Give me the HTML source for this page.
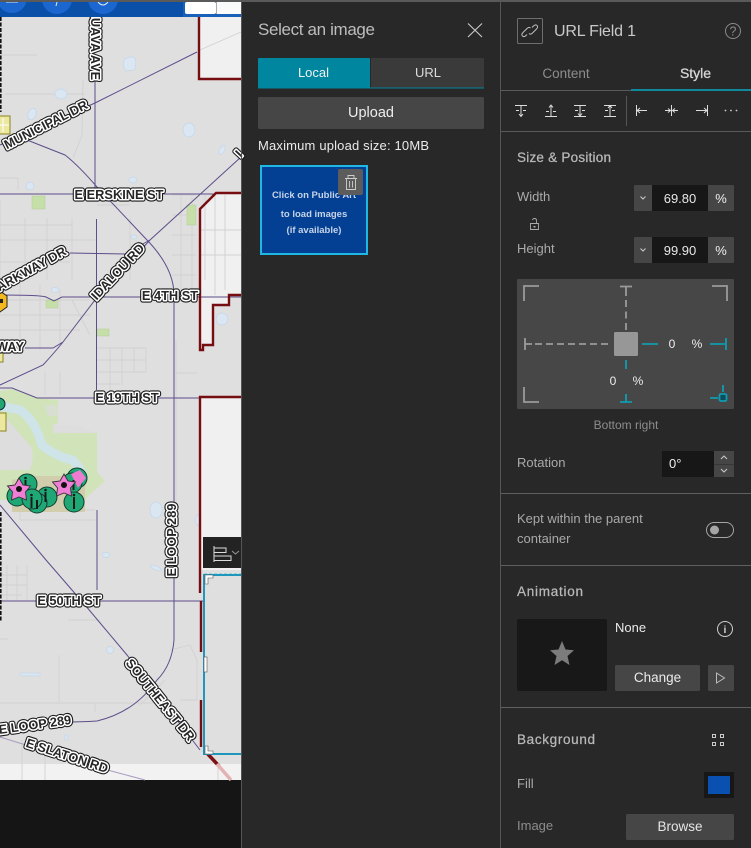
<!DOCTYPE html>
<html><head><meta charset="utf-8"><style>
html,body{margin:0;padding:0;width:751px;height:848px;overflow:hidden;background:#282828}
svg{display:block}
text{font-family:"Liberation Sans",sans-serif}
.l{font-weight:bold;font-size:12.8px;fill:#262626;stroke:#fff;stroke-width:3px;stroke-linejoin:round;paint-order:stroke;text-anchor:middle}
.o{font-weight:bold;font-size:12.8px;fill:#111;stroke:#1a1a1a;stroke-width:5.2px;stroke-linejoin:round;text-anchor:middle}
.r{fill:none;stroke:#5d4d8a;stroke-width:1}
.g{fill:none;stroke:#d2d1d2;stroke-width:.9}
.b{fill:none;stroke:#760d10;stroke-width:2.4}
.lab{fill:#aaa;font-size:13px}
.ic{fill:none;stroke:#ddd;stroke-width:1}
.h{font-size:13.5px;fill:#b8b8b8;stroke:#b8b8b8;stroke-width:.25px}
.map{filter:blur(.35px)}
</style></head><body>
<svg width="751" height="848" viewBox="0 0 751 848" xmlns="http://www.w3.org/2000/svg">
<rect width="751" height="848" fill="#282828"/>
<!-- map -->
<rect x="0" y="0" width="241" height="780" fill="#e0dfdf"/>
<rect x="0" y="764" width="241" height="16" fill="#f2f2f2"/>
<rect x="0" y="780" width="241" height="68" fill="#151515"/>
<g class="map">
<!-- minor streets -->
<g class="g">
<path d="M0 55H37M5 94H85M83 80L82 135L73 158M0 178H18V190M0 225H72M0 240H95M0 262H70M25 218V280M47 218V280M72 218V280M130 218V280M0 200V280M97 205H130M172 195H196M172 215H196M172 235H196M172 255H196M172 275H196M181 195V290M192 195V290"/>
<path d="M0 300H90M0 315H90M0 330H80M20 280V350M40 285V350M60 290V345M72 300L90 335M97 348H146M97 360H146M97 372H146M97 384H120M110 348V390M122 348V385M134 348V372M146 348V372M45 372V395M60 372V395M0 440H30M0 455H30M0 470H30M0 485H20M20 510H95M20 520H95M20 520V500M176 373H197M176 340V510"/>
<path d="M0 575H27M0 585H27M0 595H22M7 565V600M17 565V600M27 565V600M68 620H100M0 639H8M59 655V702M0 703H172M95 703V712M170 650L190 645L197 660V700M180 700H197M22 740V780M45 740V780M140 705L155 690L165 680M218 780V764"/>
</g>
<!-- water -->
<g fill="#dae6f1" stroke="#c3d6e8" stroke-width=".7">
<path d="M124 60Q130 55 135 58Q137 65 134 70L126 71Q122 66 124 60Z"/>
<ellipse cx="61" cy="94" rx="6" ry="5"/><ellipse cx="32" cy="114" rx="4" ry="6" transform="rotate(20 32 114)"/>
<ellipse cx="189" cy="130" rx="6" ry="7"/><ellipse cx="222" cy="150" rx="2.500" ry="5" transform="rotate(30 222 150)"/>
<ellipse cx="133" cy="180" rx="4" ry="3"/><ellipse cx="30" cy="186" rx="4" ry="4"/><ellipse cx="134" cy="237" rx="3" ry="2"/>
<ellipse cx="55" cy="290" rx="4" ry="2.500"/><ellipse cx="222" cy="319" rx="6" ry="6"/>
<ellipse cx="156" cy="510" rx="6" ry="8"/><ellipse cx="201" cy="520" rx="6" ry="6"/><ellipse cx="106" cy="555" rx="4" ry="2.500"/><ellipse cx="156" cy="568" rx="6" ry="2" transform="rotate(25 156 568)"/>
<circle cx="110" cy="650" r="3.500"/><rect x="20" y="673" width="20" height="3"/><rect x="65" y="735" width="3" height="5"/>
</g>
<!-- parks -->
<g fill="#c6dfa9" stroke="#b3cd98" stroke-width=".5">
<rect x="32" y="196" width="13" height="13"/><rect x="187" y="205" width="9" height="20"/>
<rect x="46" y="300" width="12" height="8"/><rect x="97" y="329" width="12" height="7"/>
</g>
<path d="M0 391L12 389L37 398L58 400V423L53 425V433H97V472L105 481L84 500H0Z" fill="#d0e3b9"/>
<path d="M45 405H57V416H48ZM53 425H75L97 433H53Z" fill="#dcdcdc" opacity=".7"/>
<path d="M0 411L32 448Q34 460 30 470H0Z" fill="#dedddd"/>
<path d="M0 406L20 410Q35 420 42 445Q55 456 72 460Q82 468 84 480" fill="none" stroke="#cfe4e8" stroke-width="9"/>
<path d="M36 476H85V512H12V480Z" fill="#d2cdad"/>
<!-- regions -->
<path d="M199 17V79H241V17Z" fill="#f1f0f0"/>
<path d="M241 193H216L200 209V350H203V345H213V305H229V295H241Z" fill="#f1f0f0"/>
<path d="M241 397H200V570H241Z" fill="#f1f0f0"/>
<path class="g" d="M200 50L241 32M200 230H241M200 255H241M205 195V280M215 195V295M225 195V290"/>
<!-- roads -->
<g class="r">
<path d="M95 80V190M197 52L95 103L0 145"/>
<path d="M0 194H215M96.500 219V390M97 510V590"/>
<path d="M27 140L65 155Q78 165 97 187L147 240Q174 268 174 295V640Q172 665 157 680Q135 712 97 721Q80 722 65 722"/>
<path d="M241 157L150 240L95 300L63 342Q55 352 43 365L0 385"/>
<path d="M70 253L125 254L150 240"/>
<path d="M0 295Q40 295 46 297L54 301L62 297H241"/>
<path d="M25 348H53L63 342"/>
<path d="M0 388H12L37 398H200"/>
<path d="M0 505L46 560L85 605L127 655L200 750"/>
<path d="M0 601H205"/>
<path d="M0 737L100 768L145 780" stroke="#a79cc0"/>
</g>
<path class="b" d="M199 17V79H241"/>
<path class="b" d="M241 193H216L200 209V350H203V345H213V305H229V295H241"/>
<path class="b" d="M241 397H200V593M201 601V652M201 700V747"/>
<path d="M204 750L219 766" fill="none" stroke="#7a1015" stroke-width="3.500"/>
<path d="M217 764L231 780" fill="none" stroke="#e3b3b3" stroke-width="3.500"/>
<!-- small yellow icons -->
<g fill="#ece8a0" stroke="#8a8420" stroke-width="1"><rect x="-4" y="116" width="14" height="18"/><rect x="-6" y="344" width="9" height="18"/><rect x="-5" y="413" width="11" height="18"/></g>
<path d="M-3 125H9M3 118V132" stroke="#fff" stroke-width="1"/>
<path d="M-6 294L0 291L7 296V307L0 312L-6 310Z" fill="#f3b81f" stroke="#222"/><rect x="-2" y="299" width="5" height="4" fill="#222"/>
<circle cx="-1" cy="404" r="6" fill="#22a56e" stroke="#124"/>
<!-- map labels -->
<g>
<g transform="translate(95,44) rotate(90)"><text class="o" y="4">GUAVA AVE</text><text class="l" y="4">GUAVA AVE</text></g>
<g transform="translate(46,125) rotate(-27)"><text class="o" y="4">MUNICIPAL DR</text><text class="l" y="4">MUNICIPAL DR</text></g>
<text class="o" x="119" y="199">E ERSKINE ST</text><text class="l" x="119" y="199">E ERSKINE ST</text>
<g transform="translate(118,272) rotate(-47)"><text class="o" y="4">IDALOU RD</text><text class="l" y="4">IDALOU RD</text></g>
<g transform="translate(28,271) rotate(-29)"><text class="o" y="4">PARKWAY DR</text><text class="l" y="4">PARKWAY DR</text></g>
<g transform="translate(239,154) rotate(-47)"><text class="o" y="4">I</text><text class="l" y="4">I</text></g>
<text class="o" x="170" y="300">E 4TH ST</text><text class="l" x="170" y="300">E 4TH ST</text>
<text class="o" x="10" y="351">WAY</text><text class="l" x="10" y="351">WAY</text>
<text class="o" x="127" y="402">E 19TH ST</text><text class="l" x="127" y="402">E 19TH ST</text>
<g transform="translate(172,540) rotate(-90)"><text class="o" y="4">E LOOP 289</text><text class="l" y="4">E LOOP 289</text></g>
<text class="o" x="69" y="605">E 50TH ST</text><text class="l" x="69" y="605">E 50TH ST</text>
<g transform="translate(160,700) rotate(51)"><text class="o" y="4">SOUTHEAST DR</text><text class="l" y="4">SOUTHEAST DR</text></g>
<g transform="translate(35,725) rotate(-8)"><text class="o" y="4">E LOOP 289</text><text class="l" y="4">E LOOP 289</text></g>
<g transform="translate(67,756) rotate(18)"><text class="o" y="4">E SLATON RD</text><text class="l" y="4">E SLATON RD</text></g>
</g>
<!-- markers -->
<g fill="#1fa876" stroke="#123d30" stroke-width="1">
<circle cx="27" cy="484" r="10"/><circle cx="17" cy="496" r="10"/><circle cx="47" cy="497" r="10"/><circle cx="37" cy="503" r="10"/><circle cx="32" cy="499" r="10"/>
<circle cx="77" cy="478" r="10"/><circle cx="72" cy="483" r="10"/><circle cx="74" cy="502" r="10"/>
</g>
<path d="M71 474L80 470L86 478L78 488Z" fill="#ee7bd0"/>
<g fill="#1a1a1a"><path d="M24.500 480h2v12h-2zM30.500 497h2v11h-2zM36 500h2v9h-2zM44.500 492h2v10h-2zM73 497h2v12h-2zM72.500 480h2v10h-2z"/><circle cx="25.500" cy="478" r="1.300"/><circle cx="31.500" cy="495" r="1.300"/><circle cx="45.500" cy="490" r="1.300"/><circle cx="74" cy="495" r="1.300"/></g>
<path d="M19 478L23 485L30.500 486L25.500 492L26.500 500L19 497L11.500 500L12.500 492L7.500 486L15 485Z" fill="#f07ed6" stroke="#333" stroke-width=".9"/>
<circle cx="19" cy="489" r="3" fill="#111"/>
<path d="M64 474L68 481L75.500 482L70.500 488L71.500 496L64 493L56.500 496L57.500 488L52.500 482L60 481Z" fill="#f07ed6" stroke="#333" stroke-width=".9"/>
<circle cx="64" cy="485" r="3" fill="#111"/>
</g>
<!-- dashed left edge -->
<path d="M.8 17V112M.8 512V622" fill="none" stroke="#111" stroke-width="1.600" stroke-dasharray="4 1.500"/>
<!-- selection box -->
<rect x="204" y="575" width="37" height="179" fill="#e0dfdf"/>
<path d="M241 575H204V754H241" fill="none" stroke="#1f97bd" stroke-width="2"/>
<path d="M204 573.500H241" stroke="#9fd0d8" stroke-dasharray="3 2"/>
<path d="M205 575H213V578H208V584H205Z" fill="#fff" stroke="#555" stroke-width=".6"/>
<path d="M205 746H208V751H213V754H205Z" fill="#fff" stroke="#555" stroke-width=".6"/>
<rect x="204" y="657" width="3" height="15" fill="#fff" stroke="#555" stroke-width=".6"/>
<!-- floating toolbar -->
<rect x="203" y="537" width="38" height="31" fill="#232323"/>
<path d="M214 546V562M214.500 548H226V552.500H214.500M214.500 556H231V560.500H214.500" fill="none" stroke="#ddd" stroke-width="1"/>
<path d="M232 551L235.500 554L239 551" fill="none" stroke="#999"/>
<!-- top bar -->
<rect x="0" y="2" width="241" height="15" fill="#0a4fa8"/>
<rect x="183" y="2" width="58" height="15" fill="#1a60b8"/>
<rect x="185" y="2" width="31" height="12" rx="2" fill="#fff"/><rect x="216.500" y="2" width="24.500" height="12" fill="#fafafa"/><path d="M216.500 2V14" stroke="#aaa"/>
<g fill="#1c66d0"><circle cx="12" cy="-2" r="15"/><circle cx="57" cy="-1" r="15"/><circle cx="103" cy="-1" r="15"/></g>
<path d="M6 2H18M57 2L56 6M98 2Q103 8 108 2" stroke="#dfe8f5" fill="none"/>
<rect x="0" y="0" width="751" height="2" fill="#5a5a5a"/>
<!-- dividers -->
<rect x="241" y="0" width="1" height="848" fill="#565656"/>
<rect x="500" y="0" width="1" height="848" fill="#565656"/>
<!-- select image panel -->
<text x="258" y="35" font-size="17" fill="#bdbdbd" textLength="117">Select an image</text>
<path d="M468 23.500L482 37M482 23.500L468 37" stroke="#ccc" stroke-width="1.100"/>
<rect x="258" y="58" width="112" height="30" rx="1" fill="#00869e"/>
<rect x="371" y="58" width="113" height="30" rx="1" fill="#3a3a3a"/>
<rect x="258" y="87.500" width="226" height="1" fill="#00869e"/>
<text x="313.500" y="77" font-size="13" fill="#f2f2f2" text-anchor="middle">Local</text>
<text x="428" y="77" font-size="13" fill="#ddd" text-anchor="middle">URL</text>
<rect x="258" y="97" width="226" height="32" rx="1.500" fill="#464646"/>
<text x="371" y="117" font-size="14.500" fill="#eee" text-anchor="middle">Upload</text>
<text x="258" y="150" font-size="13" fill="#eaeaea" textLength="171">Maximum upload size: 10MB</text>
<rect x="261" y="166" width="106" height="88" fill="#034094" stroke="#1fb8e4" stroke-width="2"/>
<g font-weight="bold" font-size="9.500" fill="#c6d3e8" text-anchor="middle">
<text x="314" y="198">Click on Public Art</text>
<text x="314" y="217">to load images</text>
<text x="314" y="233">(if available)</text></g>
<rect x="338" y="169" width="25" height="26" rx="2" fill="#5c5c5c"/>
<path d="M345 178.500H357M348 178V175.500H354V178M346.500 179V189.500H355.500V179M349.500 181V187.500M352.500 181V187.500" fill="none" stroke="#cfcfcf" stroke-width=".9"/>
<!-- right panel header -->
<rect x="517.500" y="18.500" width="25" height="25" rx="1" fill="none" stroke="#6e6e6e"/>
<path d="M527 34.500L526 35.500Q524 37.500 522.500 36Q521 34.500 523 32.500L527 28.500Q529 26.500 530.500 28M532 27.500L533.500 26Q535.500 24 537 25.500Q538.500 27 536.500 29L532.500 33Q530.500 35 529 33.500" fill="none" stroke="#c4c4c4" stroke-width=".9"/>
<text x="554" y="36" font-size="16" fill="#c9c9c9" textLength="82">URL Field 1</text>
<circle cx="733" cy="31" r="7.500" fill="none" stroke="#8a8a8a"/>
<text x="733" y="35.500" font-size="12.500" fill="#8a8a8a" text-anchor="middle">?</text>
<text x="566" y="78" font-size="13.500" fill="#8d8d8d" text-anchor="middle">Content</text>
<text x="695.500" y="78" font-size="14" fill="#d5d5d5" stroke="#d5d5d5" stroke-width=".3" text-anchor="middle">Style</text>
<rect x="501" y="90" width="250" height="1" fill="#5a5a5a"/>
<rect x="631" y="89" width="120" height="2" fill="#0f8a9c"/>
<!-- toolbar -->
<g class="ic">
<path d="M515 105.500H527M516 110.500H519M523 110.500H526M521 105.500V116M519 114L521 116.500L523 114"/>
<path d="M545 116.500H557M546 111.500H549M553 111.500H556M551 116V105.500M549 107.500L551 105L553 107.500"/>
<path d="M574 105.500H586M574 116.500H586M575 110.500H578M582 110.500H585M580 105.500V116M578 113.500L580 116L582 113.500"/>
<path d="M604 105.500H616M604 116.500H616M605 110.500H608M612 110.500H615M610 116V105.500M608 108L610 105.500L612 108"/>
<path d="M636.500 105V116M637 110.500H647M640 108L637 110.500L640 113"/>
<path d="M671.500 105V116M665 110.500H670M678 110.500H673M668 108.500L670.500 110.500L668 112.500M675 108.500L672.500 110.500L675 112.500"/>
<path d="M707.500 105V116M696 110.500H707M704 108L707 110.500L704 113"/>
</g>
<g fill="#ccc"><circle cx="725.500" cy="110.500" r=".9"/><circle cx="731" cy="110.500" r=".9"/><circle cx="736.500" cy="110.500" r=".9"/></g>
<rect x="626" y="96" width="1" height="30" fill="#555"/>
<rect x="501" y="131" width="250" height="1" fill="#5a5a5a"/>
<!-- size & position -->
<text class="h" x="517" y="162" textLength="94">Size &amp; Position</text>
<text class="lab" x="517" y="201">Width</text>
<rect x="634" y="185" width="18" height="26" rx="1" fill="#464646"/>
<path d="M640.500 196.500L643 199L645.500 196.500" fill="none" stroke="#ccc"/>
<rect x="652" y="185" width="56" height="26" fill="#171717"/>
<text x="680" y="203" font-size="13" fill="#e8e8e8" text-anchor="middle">69.80</text>
<rect x="708" y="185" width="26" height="26" rx="1" fill="#464646"/>
<text x="721" y="203" font-size="13" fill="#eee" text-anchor="middle">%</text>
<path d="M530.500 223.500H538.500V229.500H530.500ZM536.500 223.500V220.500Q536.500 218.500 534.500 218.500Q533 218.500 532.500 220" fill="none" stroke="#aaa" stroke-width=".9"/>
<rect x="533.500" y="226" width="2" height="1.500" fill="#aaa"/>
<text class="lab" x="517" y="253">Height</text>
<rect x="634" y="237" width="18" height="26" rx="1" fill="#464646"/>
<path d="M640.500 248.500L643 251L645.500 248.500" fill="none" stroke="#ccc"/>
<rect x="652" y="237" width="56" height="26" fill="#171717"/>
<text x="680" y="255" font-size="13" fill="#e8e8e8" text-anchor="middle">99.90</text>
<rect x="708" y="237" width="26" height="26" rx="1" fill="#464646"/>
<text x="721" y="255" font-size="13" fill="#eee" text-anchor="middle">%</text>
<!-- anchor widget -->
<rect x="517" y="279" width="217" height="130" rx="1" fill="#474747"/>
<g fill="none" stroke="#9a9a9a" stroke-width="1.800">
<path d="M524 301V286H539M712 286H727V301M524 387V402H539"/>
<path d="M620 286.500H632M626 287V296"/>
<path d="M525 338V350M525.500 344H532"/>
<path d="M626 300V330" stroke-dasharray="7 4.500"/>
<path d="M535 344H610" stroke-dasharray="7 4"/>
</g>
<rect x="614" y="332" width="24" height="24" rx="1.500" fill="#979797"/>
<g fill="none" stroke="#0f9cb0" stroke-width="1.800">
<path d="M642 344H658M710 344H725M726 338V350M626 360V369M620 402H632M626 394V402"/>
<path d="M710 398H718M723 385V392"/>
<rect x="719.500" y="394" width="7" height="7" rx="1.500" fill="#0d4d5c"/>
</g>
<text x="672" y="348" font-size="12" fill="#eee" text-anchor="middle">0</text>
<text x="697" y="348" font-size="12" fill="#eee" text-anchor="middle">%</text>
<text x="613" y="385" font-size="12" fill="#eee" text-anchor="middle">0</text>
<text x="638" y="385" font-size="12" fill="#eee" text-anchor="middle">%</text>
<text x="626" y="429" font-size="12" fill="#8d8d8d" text-anchor="middle">Bottom right</text>
<text class="lab" x="517" y="467">Rotation</text>
<rect x="662" y="451" width="52" height="26" rx="1" fill="#171717"/>
<text x="669" y="468" font-size="13" fill="#eee">0°</text>
<rect x="714" y="451" width="20" height="13" fill="#464646"/><rect x="714" y="464.500" width="20" height="12.500" fill="#464646"/>
<path d="M721 459L724 456L727 459M721 469L724 472L727 469" fill="none" stroke="#ccc"/>
<rect x="501" y="493" width="250" height="1" fill="#5f5f5f"/>
<text class="lab" x="517" y="523">Kept within the parent</text>
<text class="lab" x="517" y="543">container</text>
<rect x="706.500" y="522.500" width="27" height="15" rx="7.500" fill="none" stroke="#a5a5a5"/>
<circle cx="714.500" cy="530" r="4.500" fill="#a5a5a5"/>
<rect x="501" y="565" width="250" height="1" fill="#5f5f5f"/>
<!-- animation -->
<text class="h" x="517" y="596" textLength="66">Animation</text>
<rect x="517" y="619" width="90" height="72" rx="2" fill="#181818"/>
<path d="M562 641L565.500 649.500L574 650.300L567.500 656L569.500 665L562 660.300L554.500 665L556.500 656L550 650.300L558.500 649.500Z" fill="#7c7c7c"/>
<text x="615" y="632" font-size="13" fill="#eaeaea">None</text>
<circle cx="725" cy="629" r="7.500" fill="none" stroke="#cfcfcf"/>
<text x="725" y="633" font-size="10.500" font-weight="bold" fill="#cfcfcf" text-anchor="middle">i</text>
<rect x="615" y="665" width="85" height="26" rx="1.500" fill="#464646"/>
<text x="657.500" y="682" font-size="13.500" fill="#eaeaea" text-anchor="middle">Change</text>
<rect x="708" y="665" width="26" height="26" rx="1.500" fill="#464646"/>
<path d="M716.500 673V683L724.500 678Z" fill="none" stroke="#bbb"/>
<rect x="501" y="707" width="250" height="1" fill="#5f5f5f"/>
<!-- background -->
<text class="h" x="517" y="744" textLength="78">Background</text>
<g fill="none" stroke="#ccc"><rect x="712.500" y="734.500" width="3" height="3"/><rect x="720.500" y="734.500" width="3" height="3"/><rect x="712.500" y="742.500" width="3" height="3"/><rect x="720.500" y="742.500" width="3" height="3"/></g>
<text class="lab" x="517" y="788">Fill</text>
<rect x="704" y="772" width="30" height="26" fill="#171717"/>
<rect x="708" y="776" width="22" height="18" fill="#0a50b0"/>
<text class="lab" x="517" y="830" style="fill:#8d8d8d">Image</text>
<rect x="626" y="814" width="108" height="26" rx="1.500" fill="#464646"/>
<text x="680" y="831" font-size="13.500" fill="#e6e6e6" text-anchor="middle">Browse</text>
</svg>
</body></html>
